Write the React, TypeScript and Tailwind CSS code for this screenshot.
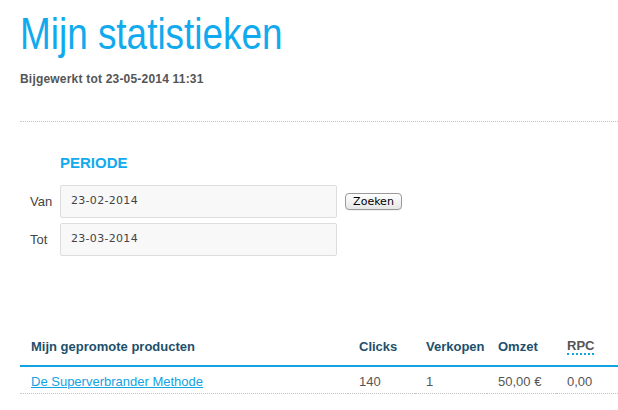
import React from 'react';

const products = [
  { name: 'De Superverbrander Methode', clicks: '140', sales: '1', revenue: '50,00 €', rpc: '0,00' },
];

export default function App() {
  return (
    <div className="min-h-screen bg-white font-['Liberation_Sans',Arial,sans-serif] text-[#444] overflow-hidden">
      <div className="pl-[20px]">
        {/* no narrow font installed, so the title is squeezed to match the condensed face */}
        <h1 className="pt-[11px] text-[45px] leading-[45px] text-[#11aaee] font-normal">
          <span className="inline-block origin-left scale-x-[0.82] whitespace-nowrap">Mijn statistieken</span>
        </h1>
        <p className="mt-[16px] text-[12px] leading-[14px] font-bold text-[#555] tracking-[0.2px]">
          Bijgewerkt tot 23-05-2014 11:31
        </p>
        <div className="mt-[35px] border-t border-dotted border-[#c4c4c4]" />

        <h2 className="mt-[32px] pl-[40px] text-[15px] leading-[18px] font-bold text-[#11aaee]">PERIODE</h2>

        <div className="mt-[13px] flex flex-col gap-[5px]">
          <div className="flex items-center">
            <label className="w-[40px] pl-[10px] text-[13px]">Van</label>
            <div className="w-[277px] h-[33px] flex items-center pl-[10px] bg-[#f8f8f8] border border-[#ddd] rounded-[2px] text-[11px] text-[#444] font-['DejaVu_Sans',sans-serif] tracking-[0.3px]">
              23-02-2014
            </div>
            <button className="ml-[8px] h-[17px] w-[57px] rounded-[4px] border border-[#999] bg-gradient-to-b from-white to-[#e6e6e6] text-[11px] leading-[15px] text-black font-['DejaVu_Sans',sans-serif] shadow-[0_1px_0_rgba(0,0,0,0.05)]">
              Zoeken
            </button>
          </div>
          <div className="flex items-center">
            <label className="w-[40px] pl-[10px] text-[13px]">Tot</label>
            <div className="w-[277px] h-[33px] flex items-center pl-[10px] bg-[#f8f8f8] border border-[#ddd] rounded-[2px] text-[11px] text-[#444] font-['DejaVu_Sans',sans-serif] tracking-[0.3px]">
              23-03-2014
            </div>
          </div>
        </div>

        <table className="mt-[76px] w-[598px] table-fixed border-collapse text-[13px] leading-[15px]">
          <colgroup>
            <col className="w-[328px]" />
            <col className="w-[67px]" />
            <col className="w-[72px]" />
            <col className="w-[69px]" />
            <col />
          </colgroup>
          <thead>
            <tr className="border-b-2 border-[#11a3e2] text-left font-bold text-[#1d4f6c]">
              <th className="pl-[11px] pt-[6px] pb-[10px]">Mijn gepromote producten</th>
              <th className="pl-[11px] pt-[6px] pb-[10px]">Clicks</th>
              <th className="pl-[11px] pt-[6px] pb-[10px]">Verkopen</th>
              <th className="pl-[11px] pt-[6px] pb-[10px]">Omzet</th>
              <th className="pl-[11px] pt-[6px] pb-[10px]">
                <span className="inline-block text-[#555] border-b-2 border-dotted border-[#11a3e2]">RPC</span>
              </th>
            </tr>
          </thead>
          <tbody>
            {products.map((p) => (
              <tr key={p.name} className="border-b border-dotted border-[#c4c4c4] text-[#555]">
                <td className="pl-[11px] pt-[7px] pb-[4px]">
                  <a href="#" className="text-[#11a3e2] underline">{p.name}</a>
                </td>
                <td className="pl-[11px] pt-[7px] pb-[4px]">{p.clicks}</td>
                <td className="pl-[11px] pt-[7px] pb-[4px]">{p.sales}</td>
                <td className="pl-[11px] pt-[7px] pb-[4px]">{p.revenue}</td>
                <td className="pl-[11px] pt-[7px] pb-[4px]">{p.rpc}</td>
              </tr>
            ))}
          </tbody>
        </table>
      </div>
    </div>
  );
}
